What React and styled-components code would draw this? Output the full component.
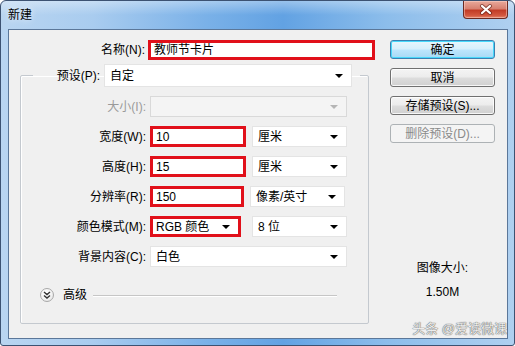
import React from 'react';
import styled, { createGlobalStyle } from 'styled-components';

const GlobalStyle = createGlobalStyle`
  html, body {
    margin: 0;
    padding: 0;
    background: #ffffff;
  }
  body {
    font-family: "Liberation Sans", "Noto Sans CJK SC", sans-serif;
    font-size: 12px;
    color: #000;
  }
`;

const Window = styled.div`
  width: 515px;
  height: 346px;
  box-sizing: border-box;
  border: 1px solid #3c5272;
  border-radius: 6px 6px 3px 3px;
  overflow: hidden;
  display: flex;
  flex-direction: column;
  background:
    linear-gradient(180deg, rgba(255, 255, 255, 0.35) 0px, rgba(255, 255, 255, 0) 14px),
    linear-gradient(90deg, #b9d5f1 0%, #a9ccef 18%, #7ab1e8 40%, #62a2e3 55%, #8cbdeb 75%, #afd0f0 100%);
`;

const TitleBar = styled.div`
  height: 28px;
  display: flex;
  align-items: flex-start;
  flex-shrink: 0;
`;

const Title = styled.div`
  padding: 7px 0 0 7px;
  font-size: 12px;
  line-height: 14px;
  color: #000;
  text-shadow: 0 0 6px rgba(255, 255, 255, 0.9);
`;

const CloseButton = styled.div`
  margin-left: auto;
  margin-right: 6px;
  width: 45px;
  height: 18px;
  box-sizing: border-box;
  border: 1px solid #6b2a22;
  border-top: none;
  border-radius: 0 0 4px 4px;
  background: linear-gradient(180deg, #e9a99b 0%, #d88171 45%, #c23c26 55%, #d3583f 85%, #e5866c 100%);
  box-shadow: inset 0 0 0 1px rgba(255, 220, 210, 0.45);
  display: flex;
  align-items: center;
  justify-content: center;
`;

const Client = styled.div`
  flex: 1;
  margin: 0 6px 6px 7px;
  border: 1px solid #5b7799;
  background: #f0f0f0;
  display: flex;
`;

const LeftPanel = styled.div`
  width: 371px;
  padding-top: 10px;
  display: flex;
  flex-direction: column;
`;

const NameRow = styled.div`
  display: grid;
  grid-template-columns: 136px 227px;
  column-gap: 3px;
  align-items: center;
  height: 20px;
`;

const Label = styled.div`
  text-align: right;
  white-space: nowrap;
  line-height: 16px;
  color: ${p => (p.$disabled ? '#9a9a9a' : '#000')};
`;

const Field = styled.div`
  box-sizing: border-box;
  height: ${p => p.$h || 21}px;
  width: ${p => (p.$w ? `${p.$w}px` : '100%')};
  display: flex;
  align-items: center;
  padding: 0 ${p => (p.$red ? 2 : 4)}px;
  background: ${p => (p.$disabled ? '#f4f4f4' : '#ffffff')};
  border: ${p => (p.$red ? '3px solid #e1101a' : p.$disabled ? '1px solid #d9d9d9' : '1px solid #e4e4e4')};
  white-space: nowrap;
  line-height: 16px;
`;

const FieldText = styled.span`
  flex: 1;
  padding-left: 1px;
`;

const Arrow = styled.span`
  width: 0;
  height: 0;
  border-left: 4px solid transparent;
  border-right: 4px solid transparent;
  border-top: 4px solid ${p => (p.$disabled ? '#b5b5b5' : '#000')};
  margin-right: ${p => (p.$red ? 6 : 4)}px;
`;

const Group = styled.fieldset`
  box-sizing: border-box;
  width: 349px;
  margin: 4px 0 0 11px;
  padding: 9px 0 21px 0;
  border: 1px solid #c4c9cf;
  box-shadow: 1px 1px 0 #ffffff inset;
  border-radius: 2px;
`;

const Legend = styled.legend`
  margin-left: 12px;
  padding: 0 8px 0 0;
  display: flex;
  align-items: center;
  gap: 4px;
`;

const Rows = styled.div`
  display: flex;
  flex-direction: column;
  gap: 9px;
`;

const Row = styled.div`
  display: grid;
  grid-template-columns: 125px 197px;
  column-gap: 4px;
  align-items: center;
`;

const Pair = styled.div`
  display: flex;
  gap: ${p => p.$gap || 6}px;
  align-items: center;
`;

const Advanced = styled.div`
  margin-top: 21px;
  height: 14px;
  display: flex;
  align-items: center;
  padding-left: 19px;
  padding-right: 31px;
`;

const Toggle = styled.div`
  width: 14px;
  height: 14px;
  box-sizing: border-box;
  border-radius: 50%;
  border: 1px solid #a9a9a9;
  background: radial-gradient(circle at 40% 35%, #ffffff 0%, #f2f2f2 55%, #dcdcdc 100%);
  display: flex;
  align-items: center;
  justify-content: center;
`;

const AdvancedText = styled.span`
  margin-left: 9px;
  line-height: 16px;
`;

const Rule = styled.div`
  flex: 1;
  margin-left: 6px;
  height: 1px;
  background: #c6c6c6;
  box-shadow: 0 1px 0 #ffffff;
`;

const RightPanel = styled.div`
  flex: 1;
  padding: 10px 0 1px 10px;
  display: flex;
  flex-direction: column;
  align-items: flex-start;
`;

const Buttons = styled.div`
  display: flex;
  flex-direction: column;
  gap: 9px;
`;

const Button = styled.button`
  width: 105px;
  height: 19px;
  padding: 0;
  margin: 0;
  box-sizing: border-box;
  font-family: inherit;
  font-size: 12px;
  line-height: 16px;
  border-radius: 3px;
  color: #000;
  border: 1px solid #707070;
  background: linear-gradient(180deg, #f4f4f4 0%, #ececec 48%, #dddddd 52%, #d0d0d0 100%);
  box-shadow: inset 0 0 0 1px rgba(255, 255, 255, 0.8);

  ${p =>
    p.$primary &&
    `
    border-color: #3c7fb1;
    background: linear-gradient(180deg, #e8f6fd 0%, #d7effc 48%, #bde6fd 52%, #a7d9f5 100%);
    box-shadow: inset 0 0 0 1px #48d8fb;
  `}

  &:disabled {
    color: #8a8a8a;
    border-color: #adb2b5;
    background: #f4f4f4;
    box-shadow: none;
  }
`;

const ImageInfo = styled.div`
  width: 105px;
  margin-top: 117px;
  text-align: center;
  line-height: 16px;
  display: flex;
  flex-direction: column;
  gap: 8px;
`;

const Watermark = styled.div`
  margin-top: auto;
  align-self: flex-end;
  font-size: 13px;
  line-height: 16px;
  color: #ececec;
  text-shadow: 0 0 1px #5a5a5a, 0 0 1px #5a5a5a;
  white-space: nowrap;
`;

const Select = ({ children, w, red, disabled }) => (
  <Field $w={w} $red={red} $disabled={disabled}>
    <FieldText>{children}</FieldText>
    <Arrow $disabled={disabled} $red={red} />
  </Field>
);

const CloseIcon = () => (
  <svg width="14" height="11" viewBox="0 0 14 11">
    <path d="M3 2 L11 9 M11 2 L3 9" stroke="#5a1a12" strokeWidth="4" strokeLinecap="round" opacity="0.6" />
    <path d="M3 2 L11 9 M11 2 L3 9" stroke="#ffffff" strokeWidth="2.2" strokeLinecap="round" />
  </svg>
);

const ChevronsDown = () => (
  <svg width="8" height="8" viewBox="0 0 8 8">
    <path d="M1 1 L4 3.5 L7 1 M1 4.5 L4 7 L7 4.5" fill="none" stroke="#333" strokeWidth="1.4" />
  </svg>
);

const rows = [
  { label: '宽度(W):', value: '10', unit: '厘米' },
  { label: '高度(H):', value: '15', unit: '厘米' },
  { label: '分辨率(R):', value: '150', unit: '像素/英寸', w: 94 },
];

export default function App() {
  return (
    <>
      <GlobalStyle />
      <Window>
        <TitleBar>
          <Title>新建</Title>
          <CloseButton>
            <CloseIcon />
          </CloseButton>
        </TitleBar>
        <Client>
          <LeftPanel>
            <NameRow>
              <Label>名称(N):</Label>
              <Field $h={20} $red>
                <FieldText>教师节卡片</FieldText>
              </Field>
            </NameRow>
            <Group>
              <Legend>
                <Label style={{ width: 67 }}>预设(P):</Label>
                <Field $w={248} $h={23}>
                  <FieldText>自定</FieldText>
                  <Arrow />
                </Field>
              </Legend>
              <Rows>
                <Row>
                  <Label $disabled>大小(I):</Label>
                  <Select disabled />
                </Row>
                {rows.map(r => (
                  <Row key={r.label}>
                    <Label>{r.label}</Label>
                    <Pair>
                      <Field $w={r.w || 96} $red>
                        <FieldText>{r.value}</FieldText>
                      </Field>
                      <Select w={95}>{r.unit}</Select>
                    </Pair>
                  </Row>
                ))}
                <Row>
                  <Label>颜色模式(M):</Label>
                  <Pair $gap={11}>
                    <Select w={91} red>RGB 颜色</Select>
                    <Select w={95}>8 位</Select>
                  </Pair>
                </Row>
                <Row>
                  <Label>背景内容(C):</Label>
                  <Select>白色</Select>
                </Row>
              </Rows>
              <Advanced>
                <Toggle>
                  <ChevronsDown />
                </Toggle>
                <AdvancedText>高级</AdvancedText>
                <Rule />
              </Advanced>
            </Group>
          </LeftPanel>
          <RightPanel>
            <Buttons>
              <Button $primary>确定</Button>
              <Button>取消</Button>
              <Button>存储预设(S)...</Button>
              <Button disabled>删除预设(D)...</Button>
            </Buttons>
            <ImageInfo>
              <span>图像大小:</span>
              <span>1.50M</span>
            </ImageInfo>
            <Watermark>头条 @爱读微课</Watermark>
          </RightPanel>
        </Client>
      </Window>
    </>
  );
}
